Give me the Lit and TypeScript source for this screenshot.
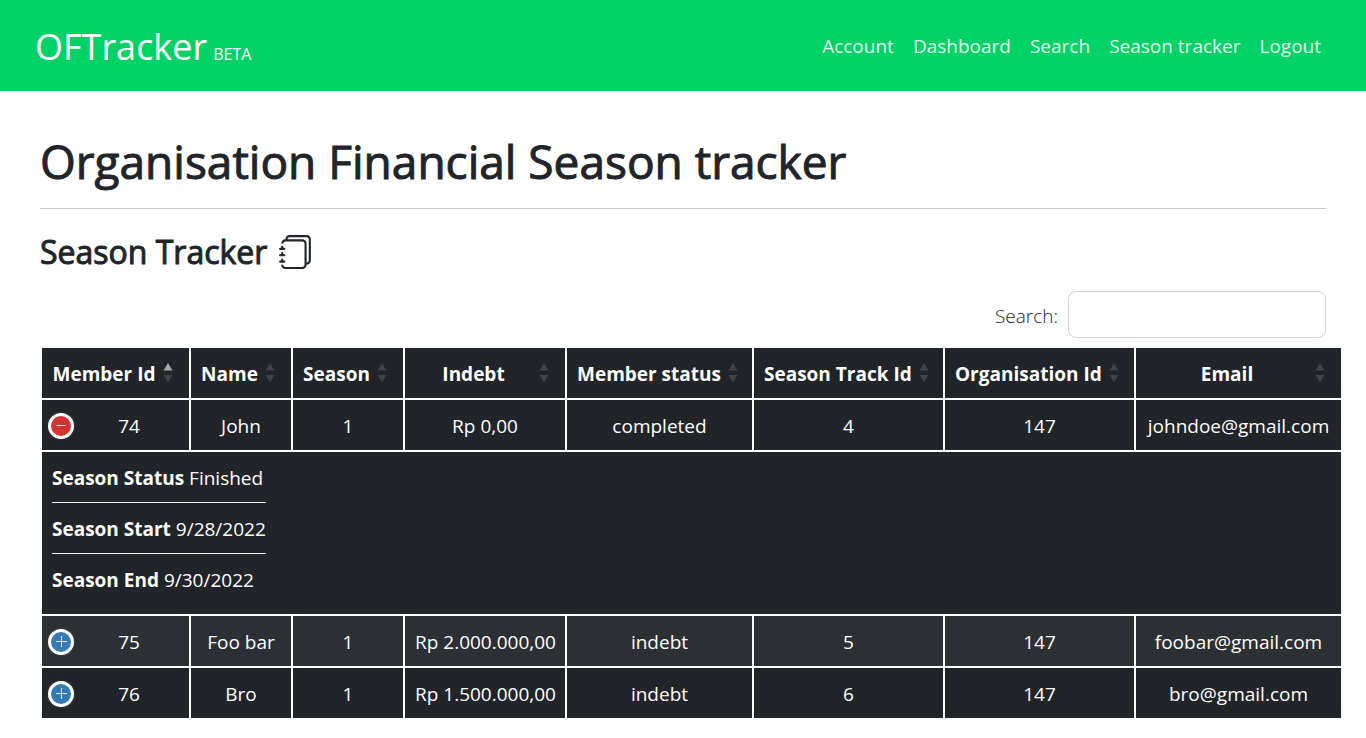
import { LitElement, html, css, svg, nothing } from "lit";
import { customElement, property, state } from "lit/decorators.js";

interface Member {
  id: number;
  name: string;
  season: number;
  indebt: string;
  status: string;
  track: number;
  org: number;
  email: string;
  details: [string, string][];
}

const MEMBERS: Member[] = [
  { id: 74, name: "John", season: 1, indebt: "Rp 0,00", status: "completed", track: 4, org: 147, email: "johndoe@gmail.com",
    details: [["Season Status", "Finished"], ["Season Start", "9/28/2022"], ["Season End", "9/30/2022"]] },
  { id: 75, name: "Foo bar", season: 1, indebt: "Rp 2.000.000,00", status: "indebt", track: 5, org: 147, email: "foobar@gmail.com",
    details: [] },
  { id: 76, name: "Bro", season: 1, indebt: "Rp 1.500.000,00", status: "indebt", track: 6, org: 147, email: "bro@gmail.com",
    details: [] },
];

const COLUMNS: { label: string; share: number }[] = [
  { label: "Member Id", share: 147 },
  { label: "Name", share: 100 },
  { label: "Season", share: 110 },
  { label: "Indebt", share: 160 },
  { label: "Member status", share: 185 },
  { label: "Season Track Id", share: 189 },
  { label: "Organisation Id", share: 189 },
  { label: "Email", share: 205 },
];

@customElement("nav-bar")
class NavBar extends LitElement {
  static styles = css`
    :host { display: block; background: #02d168; color: #fff; }
    .bar { display: flex; align-items: center; justify-content: space-between; min-height: 91px; padding: 0 35px; box-sizing: border-box; }
    .brand { display: flex; align-items: baseline; gap: 6px; padding-top: 10px; color: #fff; text-decoration: none; font-size: 36px; line-height: 52px; white-space: nowrap; }
    .beta { font-size: 16px; }
    .links { display: flex; gap: 19px; padding-right: 10px; }
    .link { color: rgba(255, 255, 255, 0.9); text-decoration: none; font-size: 19px; line-height: 30px; white-space: nowrap; }
  `;
  render() {
    return html`<nav class="bar">
      <a class="brand" href="#"><span>OFTracker</span> <span class="beta">BETA</span></a>
      <div class="links">
        ${["Account", "Dashboard", "Search", "Season tracker", "Logout"].map((t) => html`<a class="link" href="#">${t}</a>`)}
      </div>
    </nav>`;
  }
}

@customElement("sort-arrows")
class SortArrows extends LitElement {
  @property({ type: Boolean }) ascending = false;
  static styles = css`
    :host { display: block; width: 10px; height: 20px; }
    .icon { display: block; }
    .dim { fill: #fff; opacity: 0.14; }
    .lit { fill: #fff; opacity: 0.6; }
  `;
  render() {
    return html`<svg class="icon" width="10" height="20" viewBox="0 0 10 20" aria-hidden="true">
      ${svg`<path class=${this.ascending ? "lit" : "dim"} d="M5 0 9.500 7.500h-9z"/><path class="dim" d="M.5 12h9L5 19.500z"/>`}
    </svg>`;
  }
}

@customElement("member-table")
class MemberTable extends LitElement {
  @state() private open: number | null = 74;
  static styles = css`
    :host { display: block; }
    .grid { width: 100%; table-layout: fixed; border-collapse: separate; border-spacing: 2px; color: #fff; }
    .head, .cell { height: 50px; padding: 2px 10px 0; background: #212529; text-align: center; white-space: nowrap; box-sizing: border-box; line-height: 30px; }
    .head { padding: 0; font-weight: 700; }
    .sort { display: flex; align-items: center; gap: 7px; width: 100%; height: 50px; padding: 0 16px 0 10px; border: 0; background: none; color: inherit; font: inherit; cursor: pointer; }
    .label { flex: 1; padding-top: 2px; text-align: center; }
    .even .cell { background: #2c3034; }
    .cell.first { padding-left: 6px; }
    .lead { display: flex; align-items: center; gap: 5px; }
    .num { flex: 1; }
    .toggle { display: grid; place-items: center; width: 26px; height: 26px; padding: 0; border: 3px solid #fff; border-radius: 50%; background: #337ab7; box-shadow: 0 0 3px #444; box-sizing: border-box; cursor: pointer; }
    .toggle.on { background: #d33333; }
    .cell.child { height: 162px; padding: 11px 10px 8px; text-align: left; vertical-align: top; }
    .list { width: fit-content; margin: 0; padding: 0; list-style: none; }
    .item { padding: 11px 0 9px; border-bottom: 1px solid #efefef; }
    .item:first-child { padding-top: 0; }
    .item:last-child { border-bottom: 0; }
  `;
  render() {
    const total = COLUMNS.reduce((s, c) => s + c.share, 0);
    return html`<table class="grid">
      <colgroup>${COLUMNS.map((c) => html`<col style="width:${(c.share / total) * 100}%" />`)}</colgroup>
      <thead>
        <tr>
          ${COLUMNS.map((c, i) => html`<th class="head" scope="col">
            <button class="sort" type="button"><span class="label">${c.label}</span><sort-arrows ?ascending=${i === 0}></sort-arrows></button>
          </th>`)}
        </tr>
      </thead>
      <tbody>${MEMBERS.map((m, i) => this.row(m, i))}</tbody>
    </table>`;
  }
  private row(m: Member, i: number) {
    const on = this.open === m.id;
    return html`<tr class=${i % 2 ? "even" : "odd"}>
        <td class="cell first">
          <div class="lead">
            <button class="toggle ${on ? "on" : ""}" type="button" aria-expanded=${on} aria-label="Details of ${m.name}"
              @click=${() => (this.open = on ? null : m.id)}>
              <svg width="20" height="20" viewBox="0 0 20 20" fill="none" stroke="#fff" stroke-opacity=".85" aria-hidden="true">
                ${on ? svg`<path d="M5.500 9.500h9"/>` : svg`<path d="M5 9.500h11M10.500 4v11"/>`}
              </svg>
            </button>
            <span class="num">${m.id}</span>
          </div>
        </td>
        <td class="cell">${m.name}</td>
        <td class="cell">${m.season}</td>
        <td class="cell">${m.indebt}</td>
        <td class="cell">${m.status}</td>
        <td class="cell">${m.track}</td>
        <td class="cell">${m.org}</td>
        <td class="cell">${m.email}</td>
      </tr>
      ${on && m.details.length
        ? html`<tr>
            <td class="cell child" colspan="8">
              <ul class="list">${m.details.map(([k, v]) => html`<li class="item"><strong>${k}</strong> ${v}</li>`)}</ul>
            </td>
          </tr>`
        : nothing}`;
  }
}

@customElement("app-root")
class AppRoot extends LitElement {
  static styles = css`
    :host { display: block; font-family: "Open Sans", "Noto Sans", sans-serif; font-size: 19px; line-height: 30px; color: #212529; background: #fff; }
    .main { padding: 40px 40px 18px; }
    .title, .subtitle { font-weight: 400; -webkit-text-stroke: 1px currentColor; }
    .title { margin: 0; padding-bottom: 16px; font-size: 46px; line-height: 61px; border-bottom: 1px solid #c8c9ca; }
    .subtitle { display: flex; align-items: center; gap: 12px; margin: 23px 0 19px; font-size: 32px; line-height: 40px; }
    .filter { display: flex; align-items: center; justify-content: flex-end; gap: 10px; margin-bottom: 8px; }
    .filter-label { padding-top: 2px; font-weight: 300; }
    .filter-input { width: 258px; height: 47px; padding: 5px 10px; border: 1px solid #ced4da; border-radius: 8px; background: #fff; font: inherit; color: inherit; box-sizing: border-box; }
    .table { margin-right: -17px; }
  `;
  render() {
    return html`<nav-bar></nav-bar>
      <main class="main">
        <h1 class="title">Organisation Financial Season tracker</h1>
        <h2 class="subtitle">Season Tracker
          <svg width="34" height="34" viewBox="0 0 16 16" fill="#212529" aria-hidden="true">
            <path d="M5 0h8a2 2 0 0 1 2 2v10a2 2 0 0 1-2 2 2 2 0 0 1-2 2H3a2 2 0 0 1-2-2h1a1 1 0 0 0 1 1h8a1 1 0 0 0 1-1V4a1 1 0 0 0-1-1H3a1 1 0 0 0-1 1H1a2 2 0 0 1 2-2h8a2 2 0 0 1 2 2v9a1 1 0 0 0 1-1V2a1 1 0 0 0-1-1H5a1 1 0 0 0-1 1H3a2 2 0 0 1 2-2z"/>
            <path d="M1 6v-.5a.5.5 0 0 1 1 0V6h.5a.5.5 0 0 1 0 1h-2a.5.5 0 0 1 0-1H1zm0 3v-.5a.5.5 0 0 1 1 0V9h.5a.5.5 0 0 1 0 1h-2a.5.5 0 0 1 0-1H1zm0 2.500v.5H.5a.5.5 0 0 0 0 1h2a.5.5 0 0 0 0-1H2v-.5a.5.5 0 0 0-1 0z"/>
          </svg>
        </h2>
        <div class="filter">
          <label class="filter-label" for="q">Search:</label>
          <input class="filter-input" id="q" type="search" />
        </div>
        <div class="table"><member-table></member-table></div>
      </main>`;
  }
}
